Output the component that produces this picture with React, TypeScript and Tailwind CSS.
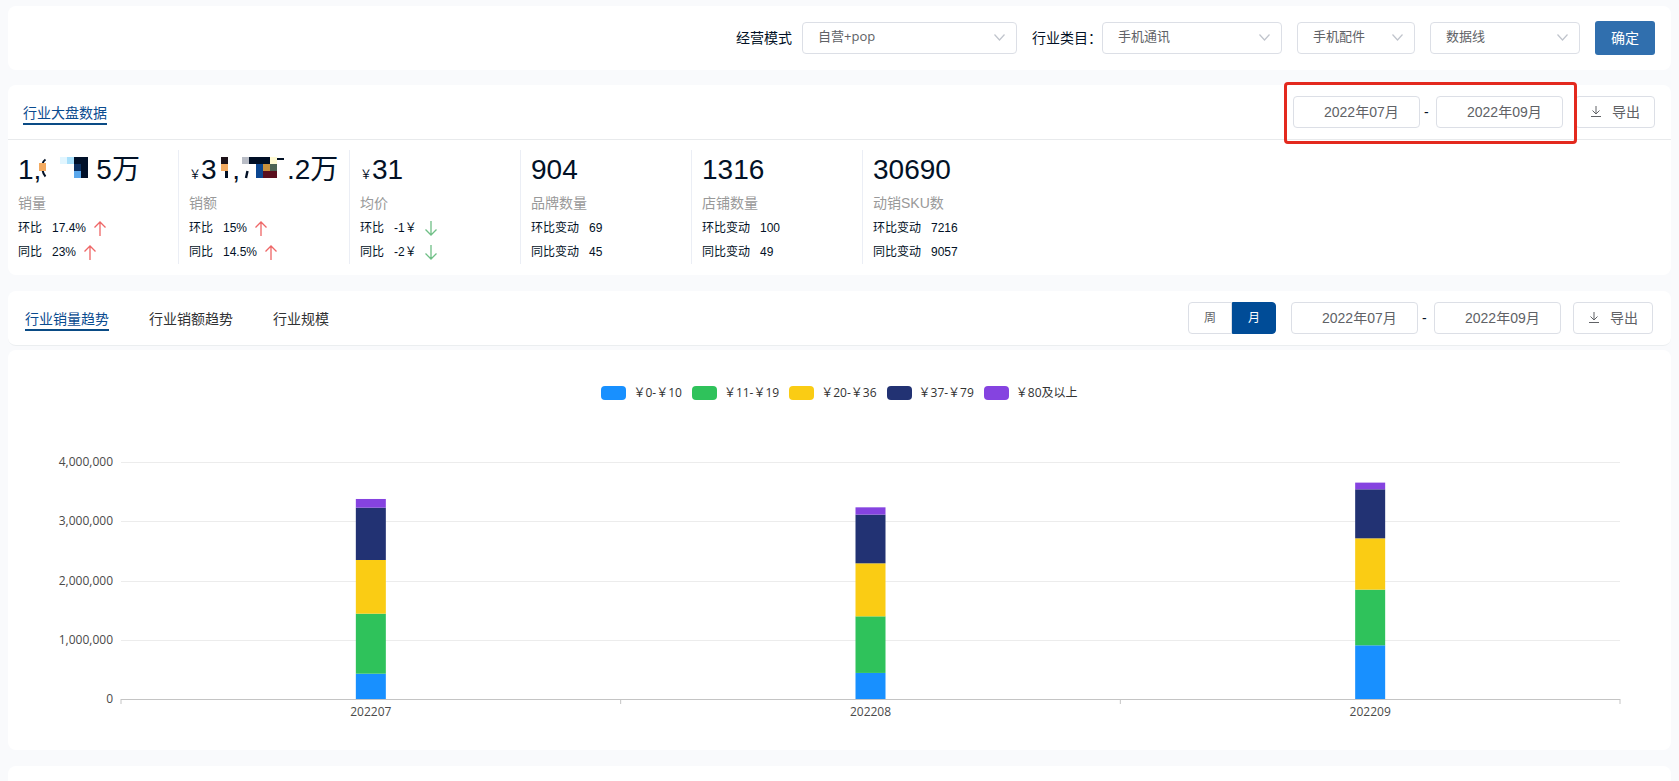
import React, { useState } from 'react';
import clsx from 'clsx';

const SERIES = [
  { name: '￥0-￥10', color: '#1890ff', swatch: 'bg-[#1890ff]' },
  { name: '￥11-￥19', color: '#2fc25b', swatch: 'bg-[#2fc25b]' },
  { name: '￥20-￥36', color: '#facc14', swatch: 'bg-[#facc14]' },
  { name: '￥37-￥79', color: '#223273', swatch: 'bg-[#223273]' },
  { name: '￥80及以上', color: '#8543e0', swatch: 'bg-[#8543e0]' },
];

const SALES = [
  { month: '202207', values: [427000, 1013000, 906000, 883000, 147000] },
  { month: '202208', values: [440000, 955000, 895000, 822000, 123000] },
  { month: '202209', values: [906000, 940000, 866000, 827000, 113000] },
];

const Y_MAX = 4000000;
const Y_TICKS = [4000000, 3000000, 2000000, 1000000, 0];
const PLOT_HEIGHT = 237;
const BAR_WIDTH = 30;

type Trend = 'up' | 'down';

interface StatRow {
  label: string;
  value: string;
  trend?: Trend;
}

interface Stat {
  label: string;
  value: React.ReactNode;
  currency?: boolean;
  rows: StatRow[];
}

// Pixelated cover over the hidden digits of the sales volume
const VolumeMosaic = () => (
  <svg width="55" height="22" className="overflow-visible" aria-hidden="true">
    <path d="M4.500 2.500C3 3.500 2 5 1.500 7M1.500 13c.5 3 1.500 5 3 6.500" fill="none" stroke="#021126" strokeWidth="2" />
    <rect x="-2" y="6" width="7" height="8" fill="#f3aa60" />
    <rect x="19" y="0" width="7" height="7" fill="#e2f6ff" />
    <rect x="26" y="0" width="7" height="7" fill="#a9e0fb" />
    <rect x="33" y="0" width="14" height="21" fill="#001029" />
    <rect x="33" y="7" width="7" height="7" fill="#0b2f60" />
    <rect x="33" y="14" width="7" height="7" fill="#5aa7ec" />
  </svg>
);

// Same cover for the sales amount
const AmountMosaic = () => (
  <svg width="47" height="22" className="relative overflow-visible" aria-hidden="true">
    <rect x="-24" y="-1" width="16" height="24" fill="#fff" />
    <rect x="-19" y="0" width="7" height="7" fill="#1c1118" />
    <rect x="-19" y="7" width="7" height="7" fill="#f3aa60" />
    <rect x="-15" y="14" width="3" height="7" fill="#021126" />
    <path d="M7.500 14 6 21" stroke="#021126" strokeWidth="2.400" />
    <rect x="2" y="0" width="7" height="7" fill="#b9bdc6" />
    <rect x="9" y="0" width="21" height="7" fill="#000f26" />
    <rect x="30" y="0" width="7" height="7" fill="#fffad2" />
    <rect x="16" y="7" width="7" height="14" fill="#0b4690" />
    <rect x="23" y="7" width="7" height="7" fill="#c8913d" />
    <rect x="30" y="7" width="7" height="7" fill="#4d6354" />
    <rect x="23" y="14" width="14" height="7" fill="#5a0f1e" />
    <rect x="37" y="1" width="7" height="2" fill="#021126" />
  </svg>
);

const STATS: Stat[] = [
  {
    label: '销量',
    value: (
      <>
        <span>1,</span>
        <VolumeMosaic />
        <span>5万</span>
      </>
    ),
    rows: [
      { label: '环比', value: '17.4%', trend: 'up' },
      { label: '同比', value: '23%', trend: 'up' },
    ],
  },
  {
    label: '销额',
    currency: true,
    value: (
      <>
        <span>31,</span>
        <AmountMosaic />
        <span>.2万</span>
      </>
    ),
    rows: [
      { label: '环比', value: '15%', trend: 'up' },
      { label: '同比', value: '14.5%', trend: 'up' },
    ],
  },
  {
    label: '均价',
    currency: true,
    value: '31',
    rows: [
      { label: '环比', value: '-1￥', trend: 'down' },
      { label: '同比', value: '-2￥', trend: 'down' },
    ],
  },
  {
    label: '品牌数量',
    value: '904',
    rows: [
      { label: '环比变动', value: '69' },
      { label: '同比变动', value: '45' },
    ],
  },
  {
    label: '店铺数量',
    value: '1316',
    rows: [
      { label: '环比变动', value: '100' },
      { label: '同比变动', value: '49' },
    ],
  },
  {
    label: '动销SKU数',
    value: '30690',
    rows: [
      { label: '环比变动', value: '7216' },
      { label: '同比变动', value: '9057' },
    ],
  },
];

const TrendArrow = ({ trend }: { trend: Trend }) => (
  <svg
    width="12"
    height="15"
    viewBox="0 0 12 15"
    fill="none"
    stroke={trend === 'up' ? '#ee6666' : '#6fbf86'}
    strokeWidth="1.300"
    aria-hidden="true"
  >
    {trend === 'up' ? <path d="M6 15V1M.5 6.500 6 1l5.500 5.500" /> : <path d="M6 0v14M.5 8.500 6 14l5.500-5.500" />}
  </svg>
);

interface SelectBoxProps {
  id: string;
  value: string;
  width: string;
  label?: string;
}

const SelectBox = ({ id, value, width, label }: SelectBoxProps) => (
  <div className={clsx('relative', width)}>
    <select
      id={id}
      aria-label={label}
      className="h-8 w-full appearance-none rounded border border-[#dcdfe6] bg-white pr-8 pb-0.5 pl-[15px] font-['Open_Sans','Noto_Sans_CJK_SC',sans-serif] text-[13px] text-[#606266] outline-none"
    >
      <option>{value}</option>
    </select>
    <svg
      className="pointer-events-none absolute top-3 right-3"
      width="11"
      height="7"
      viewBox="0 0 11 7"
      fill="none"
      stroke="#c0c4cc"
      strokeWidth="1.200"
      aria-hidden="true"
    >
      <path d="m.5.5 5 5.500 5-5.500" />
    </svg>
  </div>
);

const MonthInput = ({ label, value }: { label: string; value: string }) => (
  <input
    type="text"
    aria-label={label}
    defaultValue={value}
    className="h-8 w-[127px] rounded border border-[#dcdfe6] bg-white pb-0.5 pl-[30px] text-sm text-[#606266] outline-none"
  />
);

const MonthRange = ({ highlighted }: { highlighted?: boolean }) => (
  <div className="relative flex items-center">
    <MonthInput label="开始月份" value="2022年07月" />
    <span className="w-4 pl-1 text-sm">-</span>
    <MonthInput label="结束月份" value="2022年09月" />
    {highlighted && (
      <div className="pointer-events-none absolute -top-3.5 -right-3.5 -bottom-4 -left-[9px] rounded border-3 border-[#e3291e]" />
    )}
  </div>
);

const ExportButton = () => (
  <button
    type="button"
    className="flex h-8 items-center gap-2.5 rounded border border-[#dcdfe6] bg-white px-3.5 text-sm text-[#606266]"
  >
    <svg width="12" height="12" viewBox="0 0 12 12" fill="none" stroke="currentColor" aria-hidden="true">
      <path d="M6 0v8M2.500 4.500 6 8l3.500-3.500M1 10.500h10" />
    </svg>
    导出
  </button>
);

const TabButton = ({ active, onClick, children }: { active: boolean; onClick?: () => void; children: React.ReactNode }) => (
  <button
    type="button"
    onClick={onClick}
    className={clsx(
      'border-b-2 pt-1 text-sm leading-5',
      active ? 'border-[#0a4b85] text-[#0a4b8f]' : 'border-transparent text-[#303133]'
    )}
  >
    {children}
  </button>
);

const StatCell = ({ stat }: { stat: Stat }) => (
  <div className="w-[171px] border-r border-[#ebeef5] pl-2.5 last:border-r-0">
    <div className="flex items-baseline text-[28px] leading-10">
      {stat.currency && <span className="text-xs">￥</span>}
      {stat.value}
    </div>
    <div className="text-sm leading-[26px] text-[#999999]">{stat.label}</div>
    {stat.rows.map((row) => (
      <div key={row.label} className="flex items-center text-xs leading-6">
        <span className="mr-2.5">{row.label}</span>
        <span className="mr-2">{row.value}</span>
        {row.trend && <TrendArrow trend={row.trend} />}
      </div>
    ))}
  </div>
);

const SalesChart = () => {
  const scale = (value: number) => (value / Y_MAX) * PLOT_HEIGHT;
  const step = 100 / SALES.length;

  return (
    <svg className="h-[260px] w-full overflow-visible text-xs" role="img" aria-label="行业销量趋势">
      {Y_TICKS.map((tick) => {
        const y = Math.round(PLOT_HEIGHT - scale(tick)) + 0.5;
        return (
          <g key={tick}>
            <line x1="0" x2="100%" y1={y} y2={y} stroke={tick === 0 ? '#c4c4c4' : '#ececec'} />
            <text x="-8" y={y + 3} textAnchor="end" fill="#4a4a4a">
              {tick.toLocaleString('en-US')}
            </text>
          </g>
        );
      })}
      {[0, 1, 2, 3].map((i) => (
        <line
          key={i}
          x1={`${i * step}%`}
          x2={`${i * step}%`}
          y1={PLOT_HEIGHT}
          y2={PLOT_HEIGHT + 5}
          stroke="#c4c4c4"
        />
      ))}
      {SALES.map((item, i) => {
        const center = `${(i + 0.5) * step}%`;
        let total = 0;
        return (
          <g key={item.month}>
            {item.values.map((value, s) => {
              total += value;
              return (
                <rect
                  key={SERIES[s].name}
                  x={center}
                  y={PLOT_HEIGHT - scale(total)}
                  width={BAR_WIDTH}
                  height={scale(value)}
                  fill={SERIES[s].color}
                  transform={`translate(${-BAR_WIDTH / 2} 0)`}
                />
              );
            })}
            <text x={center} y={PLOT_HEIGHT + 17} textAnchor="middle" fill="#4a4a4a">
              {item.month}
            </text>
          </g>
        );
      })}
    </svg>
  );
};

const TABS = ['行业销量趋势', '行业销额趋势', '行业规模'];
const PERIODS = ['周', '月'];

export default function App() {
  const [tab, setTab] = useState(TABS[0]);
  const [period, setPeriod] = useState('月');

  return (
    <div className="flex min-h-screen flex-col bg-[#f9fafc] px-2 pt-1.5 font-['Liberation_Sans','Noto_Sans_CJK_SC',sans-serif] text-[#021126]">
      {/* Filters */}
      <div className="mb-[15px] flex items-center justify-end gap-[15px] rounded-lg bg-white px-4 py-[15px]">
        <div className="flex items-center gap-2.5">
          <label htmlFor="mode" className="text-sm">
            经营模式
          </label>
          <SelectBox id="mode" value="自营+pop" width="w-[215px]" />
        </div>
        <div className="flex items-center">
          <label htmlFor="category" className="text-sm">
            行业类目：
          </label>
          <SelectBox id="category" value="手机通讯" width="w-[180px]" />
        </div>
        <SelectBox id="category2" label="二级类目" value="手机配件" width="w-[118px]" />
        <SelectBox id="category3" label="三级类目" value="数据线" width="w-[150px]" />
        <button type="button" className="h-[34px] rounded-[3px] bg-[#306fae] px-4 text-sm text-white">
          确定
        </button>
      </div>

      {/* Market overview */}
      <section className="mb-4 rounded-lg bg-white">
        <div className="flex items-center justify-between border-b border-[#e8eaec] py-[11px] pr-4 pl-[15px]">
          <TabButton active>行业大盘数据</TabButton>
          <div className="flex gap-3">
            <MonthRange highlighted />
            <ExportButton />
          </div>
        </div>
        <div className="flex pt-2.5 pb-[11px]">
          {STATS.map((stat) => (
            <StatCell key={stat.label} stat={stat} />
          ))}
        </div>
      </section>

      {/* Trend */}
      <div className="mb-1 flex items-center justify-between rounded-lg border-b border-[#ebeef0] bg-white py-[11px] pr-[18px] pl-[17px]">
        <div className="flex gap-10">
          {TABS.map((name) => (
            <TabButton key={name} active={name === tab} onClick={() => setTab(name)}>
              {name}
            </TabButton>
          ))}
        </div>
        <div className="flex items-center">
          <div className="mr-[15px] flex">
            {PERIODS.map((name) => (
              <button
                key={name}
                type="button"
                onClick={() => setPeriod(name)}
                className={clsx(
                  'h-8 border px-[15px] text-xs first:rounded-l last:rounded-r',
                  name === period
                    ? 'border-[#004c97] bg-[#004c97] text-white'
                    : 'border-[#dcdfe6] bg-white text-[#606266]'
                )}
              >
                {name}
              </button>
            ))}
          </div>
          <div className="flex gap-3">
            <MonthRange />
            <ExportButton />
          </div>
        </div>
      </div>
      <section className="mb-4 rounded-lg bg-white pt-[34px] pb-7 font-['Open_Sans','Noto_Sans_CJK_SC',sans-serif]">
        <div className="flex justify-center gap-2.5">
          {SERIES.map((item) => (
            <div key={item.name} className="flex items-center gap-[7px] text-xs leading-[18px] text-[#333333]">
              <span className={clsx('h-3.5 w-[25px] rounded', item.swatch)} />
              {item.name}
            </div>
          ))}
        </div>
        <div className="mt-[60px] mr-[51px] ml-[113px]">
          <SalesChart />
        </div>
      </section>
      <div className="flex-1 rounded-t-lg bg-white" />
    </div>
  );
}
